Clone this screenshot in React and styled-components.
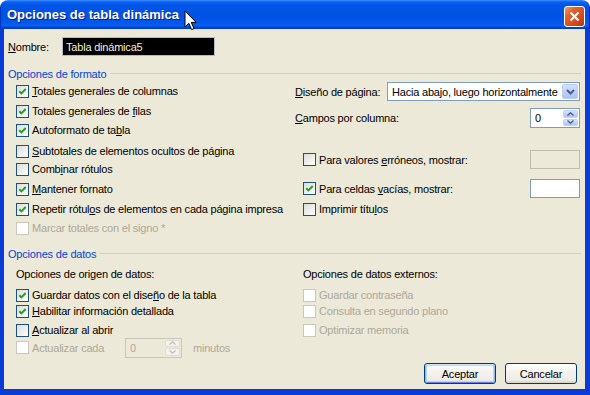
import styled, { createGlobalStyle } from "styled-components";

const GlobalStyle = createGlobalStyle`
  html, body {
    margin: 0;
    padding: 0;
    background: #ffffff;
  }
  body {
    font-family: "Liberation Sans", Arial, sans-serif;
    font-size: 11px;
  }
`;

function CheckMark() {
  return (
    <svg width="11" height="11" viewBox="0 0 11 11">
      <path d="M2.3 5.2 L4.4 7.4 L8.7 3" fill="none" stroke="#21a121" strokeWidth="2" />
    </svg>
  );
}

function Check({ checked, disabled, mt = 0, h = 18, width, children }) {
  return (
    <CheckRow $mt={mt} $h={h} $width={width} $disabled={disabled}>
      <Box $disabled={disabled}>{checked && <CheckMark />}</Box>
      <span>{children}</span>
    </CheckRow>
  );
}

function Spinner({ value, width, disabled }) {
  const c = disabled ? "#c4c2b8" : "#4d6185";
  return (
    <SpinBox $width={width} $disabled={disabled}>
      <SpinValue>{value}</SpinValue>
      <SpinButtons>
        <SpinHalf $disabled={disabled}>
          <svg width="7" height="4" viewBox="0 0 7 4">
            <path d="M0.5 3.5 L3.5 0.8 L6.5 3.5" fill="none" stroke={c} strokeWidth="1.4" />
          </svg>
        </SpinHalf>
        <SpinHalf $disabled={disabled}>
          <svg width="7" height="4" viewBox="0 0 7 4">
            <path d="M0.5 0.5 L3.5 3.2 L6.5 0.5" fill="none" stroke={c} strokeWidth="1.4" />
          </svg>
        </SpinHalf>
      </SpinButtons>
    </SpinBox>
  );
}

export default function App() {
  return (
    <>
      <GlobalStyle />
      <Window>
        <TitleBar>
          <Title>Opciones de tabla dinámica</Title>
          <CloseButton>
            <svg width="11" height="11" viewBox="0 0 11 11">
              <path d="M1.5 1.5 L9.5 9.5 M9.5 1.5 L1.5 9.5" stroke="#fff" strokeWidth="2.2" />
            </svg>
          </CloseButton>
        </TitleBar>

        <Body>
          <NameRow>
            <NameLabel><Key>N</Key>ombre:</NameLabel>
            <NameInput>Tabla dinámica5</NameInput>
          </NameRow>

          <GroupHeading $mt={11}>Opciones de formato</GroupHeading>
          <Columns>
            <Column>
              <Check checked mt={2}><Key>T</Key>otales generales de columnas</Check>
              <Check checked mt={2}>Totales generales de <Key>f</Key>ilas</Check>
              <Check checked mt={1}>Autoformato de ta<Key>b</Key>la</Check>
              <Check mt={3}><Key>S</Key>ubtotales de elementos ocultos de página</Check>
              <Check mt={0}>Comb<Key>i</Key>nar rótulos</Check>
              <Check checked mt={2}><Key>M</Key>antener fornato</Check>
              <Check checked mt={2}>Repetir rótul<Key>o</Key>s de elementos en cada página impresa</Check>
              <Check disabled mt={1}>Marcar totales con el signo *</Check>
            </Column>

            <Column>
              <FieldRow $mt={2} $h={19}>
                <span><Key>D</Key>iseño de página:</span>
                <Select>
                  <SelectText>Hacia abajo, luego horizontalmente</SelectText>
                  <DropButton>
                    <svg width="9" height="6" viewBox="0 0 9 6">
                      <path d="M1 1 L4.5 4.5 L8 1" fill="none" stroke="#4d6185" strokeWidth="2" />
                    </svg>
                  </DropButton>
                </Select>
              </FieldRow>
              <FieldRow $mt={7} $h={20}>
                <span><Key>C</Key>ampos por columna:</span>
                <Spinner value="0" width={50} />
              </FieldRow>
              <FieldRow $mt={22} $h={19} $indent={8}>
                <Check h={19}>Para valores <Key>e</Key>rróneos, mostrar:</Check>
                <TextBox $disabled />
              </FieldRow>
              <FieldRow $mt={10} $h={19} $indent={8}>
                <Check checked h={19}>Para celdas <Key>v</Key>acías, mostrar:</Check>
                <TextBox />
              </FieldRow>
              <FieldRow $mt={2} $h={18} $indent={8}>
                <Check>Imprimir títu<Key>l</Key>os</Check>
              </FieldRow>
            </Column>
          </Columns>

          <GroupHeading $mt={10}>Opciones de datos</GroupHeading>
          <Columns>
            <Column>
              <SubLabel>Opciones de origen de datos:</SubLabel>
              <Check checked mt={6} h={16}>Guardar datos con el dise<Key>ñ</Key>o de la tabla</Check>
              <Check checked h={16}><Key>H</Key>abilitar información detallada</Check>
              <Check mt={3} h={16}><Key>A</Key>ctualizar al abrir</Check>
              <RefreshRow>
                <Check disabled h={19} width={109}>Actualizar cada</Check>
                <Spinner value="0" width={57} disabled />
                <Minutes>minutos</Minutes>
              </RefreshRow>
            </Column>

            <Column $indent={8}>
              <SubLabel>Opciones de datos externos:</SubLabel>
              <Check disabled mt={6} h={16}>Guardar contraseña</Check>
              <Check disabled h={16}>Consulta en segundo plano</Check>
              <Check disabled mt={3} h={16}>Optimizar memoria</Check>
            </Column>
          </Columns>

          <ButtonRow>
            <Button $default>Aceptar</Button>
            <Button>Cancelar</Button>
          </ButtonRow>
        </Body>

        <Cursor width="13" height="21" viewBox="0 0 13 21">
          <path d="M1 1 L1 17 L4.8 13.3 L7.6 19.6 L10 18.6 L7.3 12.4 L12.2 12.4 Z" fill="#fff" stroke="#000" strokeWidth="1" strokeLinejoin="round" />
        </Cursor>
      </Window>
    </>
  );
}

const Window = styled.div`
  position: relative;
  width: 590px;
  height: 395px;
  display: flex;
  flex-direction: column;
  border-radius: 8px 8px 0 0;
  overflow: hidden;
`;

const TitleBar = styled.div`
  height: 29px;
  flex-shrink: 0;
  display: flex;
  align-items: flex-start;
  justify-content: space-between;
  background: linear-gradient(
    to bottom,
    #3d8eff 0%,
    #0a5ff0 7%,
    #0054e6 20%,
    #0052e3 55%,
    #0059ec 80%,
    #0c5ff4 88%,
    #0046d2 94%,
    #003bc4 100%
  );
  border-left: 1px solid #0036b8;
  border-right: 1px solid #00249e;
`;

const Title = styled.div`
  margin: 7px 0 0 6px;
  line-height: 16px;
  font-family: "Liberation Sans", Arial, sans-serif;
  font-weight: bold;
  font-size: 13px;
  color: #ffffff;
  text-shadow: 1px 1px 0 #0a1a8a;
`;

const CloseButton = styled.div`
  width: 21px;
  height: 21px;
  box-sizing: border-box;
  margin: 6px 4px 0 0;
  display: flex;
  align-items: center;
  justify-content: center;
  border: 1px solid #ffffff;
  border-radius: 3px;
  background: linear-gradient(135deg, #f19a7a 0%, #e2602f 30%, #d24c21 65%, #b9380f 100%);
`;

const Body = styled.div`
  flex: 1;
  display: flex;
  flex-direction: column;
  background: #ece9d8;
  border-style: solid;
  border-color: #0a3bd6;
  border-width: 0 5px 6px 4px;
  color: #000000;
  letter-spacing: -0.2px;
`;

const Key = styled.span`
  text-decoration: underline;
`;

const NameRow = styled.div`
  display: flex;
  align-items: center;
  height: 19px;
  margin-top: 8px;
  padding-left: 4px;
`;

const NameLabel = styled.span`
  width: 54px;
`;

const NameInput = styled.div`
  width: 153px;
  height: 19px;
  box-sizing: border-box;
  padding-left: 3px;
  display: flex;
  align-items: center;
  border: 1px solid #b7bcc4;
  background: #000000;
  color: #f3efd8;
`;

const GroupHeading = styled.div`
  display: flex;
  align-items: center;
  gap: 4px;
  height: 13px;
  margin-top: ${p => p.$mt}px;
  padding: 0 4px;
  color: #0046d5;

  &::after {
    content: "";
    flex: 1;
    height: 1px;
    background: #d0d0bf;
  }
`;

const Columns = styled.div`
  display: grid;
  grid-template-columns: 279px 1fr;
  padding: 0 5px 0 12px;
`;

const Column = styled.div`
  display: flex;
  flex-direction: column;
  padding-left: ${p => p.$indent || 0}px;
`;

const CheckRow = styled.label`
  display: flex;
  align-items: center;
  gap: 3px;
  height: ${p => p.$h}px;
  margin-top: ${p => p.$mt}px;
  width: ${p => (p.$width ? `${p.$width}px` : "auto")};
  flex-shrink: 0;
  white-space: nowrap;
  color: ${p => (p.$disabled ? "#aca899" : "#000000")};
`;

const Box = styled.span`
  width: 13px;
  height: 13px;
  box-sizing: border-box;
  flex-shrink: 0;
  display: flex;
  align-items: center;
  justify-content: center;
  border: 1px solid ${p => (p.$disabled ? "#cac8bb" : "#1c5180")};
  background: ${p =>
    p.$disabled ? "#ffffff" : "linear-gradient(135deg, #dcdcd7 0%, #ffffff 100%)"};
`;

const FieldRow = styled.div`
  display: flex;
  align-items: center;
  justify-content: space-between;
  height: ${p => p.$h}px;
  margin-top: ${p => p.$mt}px;
  padding-left: ${p => p.$indent || 0}px;
`;

const Select = styled.div`
  width: 193px;
  height: 19px;
  box-sizing: border-box;
  display: flex;
  align-items: center;
  border: 1px solid #7f9db9;
  background: #ffffff;
`;

const SelectText = styled.span`
  flex: 1;
  padding-left: 4px;
  white-space: nowrap;
  overflow: hidden;
`;

const DropButton = styled.span`
  width: 16px;
  height: 15px;
  margin-right: 1px;
  box-sizing: border-box;
  display: flex;
  align-items: center;
  justify-content: center;
  border: 1px solid #bccdf6;
  border-radius: 2px;
  background: linear-gradient(to bottom, #d6e2fc 0%, #bcd0fa 50%, #abc2f5 100%);
`;

const SpinBox = styled.div`
  width: ${p => p.$width}px;
  height: 20px;
  box-sizing: border-box;
  display: flex;
  align-items: stretch;
  border: 1px solid ${p => (p.$disabled ? "#c9c7ba" : "#7f9db9")};
  background: ${p => (p.$disabled ? "#ece9d8" : "#ffffff")};
  color: ${p => (p.$disabled ? "#aca899" : "#000000")};
`;

const SpinValue = styled.span`
  flex: 1;
  display: flex;
  align-items: center;
  padding-left: 4px;
`;

const SpinButtons = styled.span`
  width: 15px;
  margin: 1px;
  display: flex;
  flex-direction: column;
  gap: 1px;
`;

const SpinHalf = styled.span`
  flex: 1;
  display: flex;
  align-items: center;
  justify-content: center;
  border-radius: 2px;
  background: ${p =>
    p.$disabled
      ? "#f4f3ee"
      : "linear-gradient(to bottom, #d6e2fc 0%, #bcd0fa 60%, #abc2f5 100%)"};
  border: 1px solid ${p => (p.$disabled ? "#e0ded3" : "#c4d4f8")};
`;

const TextBox = styled.div`
  width: 50px;
  height: 19px;
  box-sizing: border-box;
  border: 1px solid ${p => (p.$disabled ? "#bfbdb1" : "#7f9db9")};
  background: ${p => (p.$disabled ? "#ece9d8" : "#ffffff")};
`;

const SubLabel = styled.div`
  height: 13px;
  line-height: 13px;
  margin-top: 8px;
  padding-left: 0;
`;

const RefreshRow = styled.div`
  display: flex;
  align-items: center;
  height: 19px;
`;

const Minutes = styled.span`
  margin-left: 11px;
  color: #aca899;
`;

const ButtonRow = styled.div`
  display: flex;
  justify-content: flex-end;
  gap: 9px;
  margin-top: 6px;
  padding-right: 8px;
`;

const Button = styled.div`
  width: 72px;
  height: 21px;
  box-sizing: border-box;
  display: flex;
  align-items: center;
  justify-content: center;
  border: 1px solid #003c74;
  border-radius: 3px;
  background: linear-gradient(to bottom, #ffffff 0%, #f4f3ee 40%, #ecebe6 85%, #d6d0c5 100%);
  box-shadow: ${p =>
    p.$default
      ? "inset 0 1px 0 #cee7ff, inset 1px 0 0 #98b8ea, inset -1px 0 0 #98b8ea, inset 0 -1px 0 #6982ee, inset 0 0 0 2px #bcd4f6"
      : "none"};
`;

const Cursor = styled.svg`
  position: absolute;
  left: 184px;
  top: 10px;
`;
